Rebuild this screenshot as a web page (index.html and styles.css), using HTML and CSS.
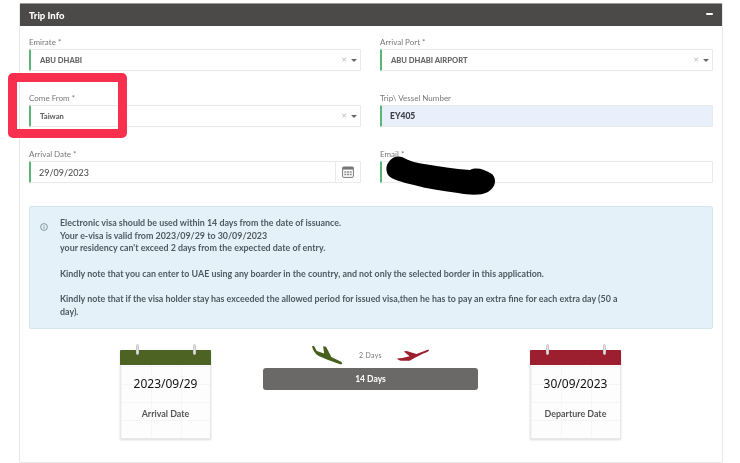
FILE: index.html
```html
<!DOCTYPE html>
<html lang="en">
<head>
<meta charset="utf-8">
<title>Trip Info</title>
<link rel="stylesheet" href="styles.css">
</head>
<body>
<section class="card">
  <header class="card-head">
    <h2>Trip Info</h2>
    <span class="collapse"></span>
  </header>
  <div class="card-body">
    <div class="form-grid">
      <div class="field">
        <label>Emirate *</label>
        <div class="control select"><span class="value">ABU DHABI</span><span class="clear">×</span><span class="caret"></span></div>
      </div>
      <div class="field">
        <label>Arrival Port *</label>
        <div class="control select"><span class="value">ABU DHABI AIRPORT</span><span class="clear">×</span><span class="caret"></span></div>
      </div>
      <div class="field">
        <label>Come From *</label>
        <div class="control select"><span class="value">Taiwan</span><span class="clear">×</span><span class="caret"></span></div>
      </div>
      <div class="field">
        <label>Trip\ Vessel Number</label>
        <div class="control filled"><span class="value dark">EY405</span></div>
      </div>
      <div class="field">
        <label>Arrival Date *</label>
        <div class="control date"><span class="value date-value">29/09/2023</span>
          <span class="date-btn">
            <svg width="12" height="12" viewBox="0 0 12 12"><rect x="0.6" y="1" width="10.8" height="10.4" rx="1.2" fill="none" stroke="#777" stroke-width="1"/><rect x="0.6" y="1" width="10.8" height="2.6" fill="#777"/><path d="M2.3 5.2h2v1.6h-2zM5 5.2h2v1.6H5zM7.7 5.2h2v1.6h-2zM2.3 7.7h2v1.6h-2zM5 7.7h2v1.6H5zM7.7 7.700h2v1.6h-2z" fill="#888"/></svg>
          </span>
        </div>
      </div>
      <div class="field">
        <label>Email *</label>
        <div class="control"></div>
      </div>
    </div>

    <div class="alert">
      <svg class="alert-icon" width="8" height="8" viewBox="0 0 8 8"><circle cx="4" cy="4" r="3.4" fill="none" stroke="#6f8088" stroke-width="0.8"/><path d="M4 3.4v2.4M4 2v.8" stroke="#6f8088" stroke-width="0.8"/></svg>
      <div class="alert-text">
        <p>Electronic visa should be used within 14 days from the date of issuance.<br>Your e-visa is valid from 2023/09/29 to 30/09/2023<br>your residency can't exceed 2 days from the expected date of entry.</p>
        <p>Kindly note that you can enter to UAE using any boarder in the country, and not only the selected border in this application.</p>
        <p>Kindly note that if the visa holder stay has exceeded the allowed period for issued visa,then he has to pay an extra fine for each extra day (50 a day).</p>
      </div>
    </div>

    <div class="summary">
      <div class="calendar arrive">
        <i class="ring left"></i><i class="ring right"></i>
        <div class="cal-top"></div>
        <div class="cal-date">2023/09/29</div>
        <div class="cal-label">Arrival Date</div>
      </div>
      <div class="duration">
        <div class="flight">
          <svg width="33" height="22" viewBox="0 0 34 22"><path d="M1 2L3 1.500 6 7 13.500 9.500 12.500 2 15.500 2.500 21 13 31 18C33 19.500 32.500 21 30 20.500L17 16 8 12C4 10 2 6 1 2Z" fill="#48601f"/></svg>
          <span class="flight-days">2 Days</span>
          <svg width="33" height="14" viewBox="0 0 34 14"><path d="M0 10.500L5.500 10.200 13 8.200 7 3.500 10 3 20 6 29 2.500C31 1.600 33 1.500 33 2 33 3 30 4.500 27 5.500L18 10 13 13 6 13C3.500 13 1 12 0 10.500Z" fill="#9c1f30"/></svg>
        </div>
        <div class="bar">14 Days</div>
      </div>
      <div class="calendar depart">
        <i class="ring left"></i><i class="ring right"></i>
        <div class="cal-top"></div>
        <div class="cal-date">30/09/2023</div>
        <div class="cal-label">Departure Date</div>
      </div>
    </div>
  </div>
</section>

<div class="highlight"></div>
<svg class="scribble" width="115" height="42" viewBox="0 0 115 42"><path d="M3 10C6 3 12 0 18 2 26 6 32 8 40 9 55 11 70 14 86 15 92 12 100 14 108 19 113 24 112 32 104 37 96 41 85 40 74 38 60 36 44 34 30 30 18 27 8 25 4 20 2 16 2 13 3 10Z" fill="#000"/></svg>
</body>
</html>
```
FILE: styles.css
```css
* { box-sizing: border-box; }
html, body { margin: 0; padding: 0; }
body {
  width: 740px;
  height: 463px;
  overflow: hidden;
  background: #fff;
  position: relative;
  font-family: "Lato", "Noto Sans", sans-serif;
  color: #555;
  padding: 3px 17px 0 19px;
  filter: blur(0.35px);
}
.card {
  height: 460px;
  border: 1px solid #e6e8ea;
  border-top: 0;
  border-radius: 2px;
}
.card-head {
  height: 23px;
  background: #4c4a49;
  border-top: 1px solid #9a9a9a;
  display: flex;
  align-items: center;
  justify-content: space-between;
  padding: 0 10px 0 9px;
  color: #fff;
}
.card-head h2 { margin: 0; font-size: 9.500px; font-weight: 900; }
.collapse { width: 7px; height: 2.500px; background: #fff; border-radius: 1px; margin-top: -2px; margin-right: -1px; }
.card-body { padding: 11px 9px 0 9px; }
.form-grid {
  display: grid;
  grid-template-columns: 332px 333px;
  column-gap: 19px;
  row-gap: 22px;
}
.field { height: 34px; }
.field label {
  display: block;
  height: 11px;
  line-height: 11px;
  font-size: 8px;
  color: #777;
  margin-bottom: 1px;
}
.control {
  height: 22px;
  border: 1px solid #e8eaec;
  border-left: 2px solid #5cb578;
  border-radius: 1px;
  background: #fff;
  display: flex;
  align-items: center;
  padding-left: 9px;
}
.value { font-size: 7.600px; font-weight: 900; color: #666; flex: 1; }
.value.dark { color: #3a3f45; font-size: 8.500px; margin-left: -1px; }
.filled { background: #e9effb; }
.clear { font-size: 10px; font-weight: 300; color: #999; line-height: 1; margin: -3px 4px 0 0; }
.caret {
  width: 0; height: 0;
  border-left: 3px solid transparent;
  border-right: 3px solid transparent;
  border-top: 3.500px solid #666;
  margin-right: 3px;
}
.date { padding-left: 8px; padding-right: 0; }
.date-value { font-size: 9px; font-weight: 400; color: #444; }
.date-btn {
  width: 25px; height: 20px;
  border-left: 1px solid #e8eaec;
  display: flex; align-items: center; justify-content: center;
}
.alert {
  margin-top: 23px;
  height: 123px;
  background: #e5f1f8;
  border: 1px solid #d5e5ee;
  border-radius: 2px;
  display: flex;
  padding: 10px 10px 0 10px;
  color: #4e5a60;
}
.alert-icon { flex: none; margin: 6px 12px 0 0; }
.alert-text { font-size: 8.900px; font-weight: 700; line-height: 12.700px; width: 575px; }
.alert-text p { margin: 0 0 12.500px; }
.summary {
  display: flex;
  justify-content: center;
  gap: 52px;
  margin-top: 21px;
  padding-right: 1px;
}
.calendar {
  width: 91px;
  height: 89px;
  position: relative;
  background: #fdfdfd;
  border: 1px solid #e8e8e8;
  border-top: 0;
  box-shadow: 0 1px 2px rgba(0,0,0,.15);
  text-align: center;
  background-image:
    linear-gradient(#f5f5f5 1px, transparent 1px),
    linear-gradient(90deg, #f6f6f6 1px, transparent 1px);
  background-size: 30px 18px;
  background-position: 0 16px;
}
.cal-top { height: 15px; margin: 0 -1px; border-radius: 1px 1px 0 0; }
.arrive .cal-top { background: #4d6324; }
.depart .cal-top { background: #9c1f30; }
.ring {
  position: absolute;
  top: -6px;
  width: 3px; height: 11px;
  background: #e2e2e2;
  border: 1px solid #c8c8c8;
  border-radius: 2px;
}
.ring.left { left: 15px; }
.ring.right { right: 14px; }
.cal-date { font-family: "Noto Sans", sans-serif; font-size: 12px; color: #111; margin-top: 10px; line-height: 17px; }
.cal-label { font-size: 8.900px; font-weight: 700; color: #555; margin-top: 16px; line-height: 12px; }
.duration { width: 215px; margin-top: -9px; }
.flight {
  height: 27px;
  display: flex;
  align-items: center;
  justify-content: center;
  gap: 15px;
}
.flight-days { font-size: 7px; color: #777; letter-spacing: .3px; }
.bar {
  height: 22px;
  background: #6b6968;
  border-radius: 3px;
  color: #fff;
  font-size: 8.500px;
  font-weight: 700;
  display: flex;
  align-items: center;
  justify-content: center;
}
.highlight {
  position: absolute;
  left: 8px; top: 73px;
  width: 119px; height: 65px;
  border: 9px solid #f9304d;
  border-radius: 5px;
}
.scribble { position: absolute; left: 384px; top: 155px; }
```
